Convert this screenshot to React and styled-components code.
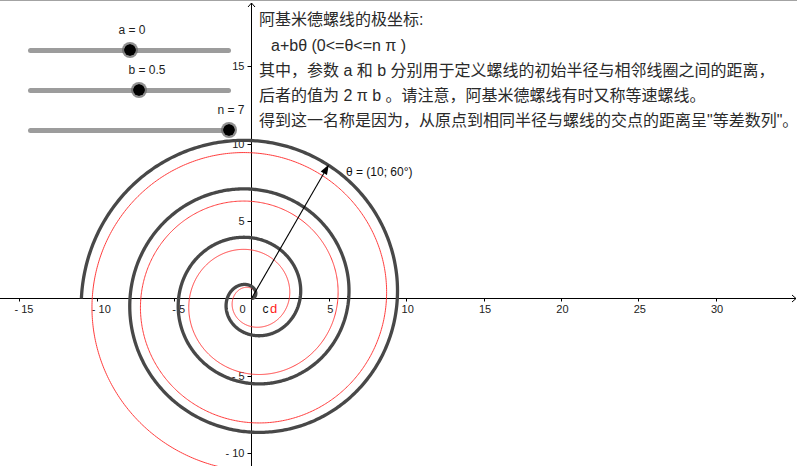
import React from "react";
import styled, { createGlobalStyle } from "styled-components";

const GlobalStyle = createGlobalStyle`
  html, body { margin: 0; padding: 0; background: #ffffff; }
  #root { width: 797px; height: 466px; }
`;

const S = 15.47;
const OX = 251.5;
const OY = 298.5;
const W = 797;
const H = 466;

const px = (x) => OX + x * S;
const py = (y) => OY - y * S;

const smooth = (x) => (x <= 0 ? 0 : x >= 1 ? 1 : 3 * x * x - 2 * x * x * x);

function polarPath(rFn, t0, t1, n) {
  let d = "";
  for (let i = 0; i <= n; i++) {
    const t = t0 + ((t1 - t0) * i) / n;
    const r = rFn(t);
    const x = px(r * Math.cos(t));
    const y = py(r * Math.sin(t));
    d += (i ? "L" : "M") + x.toFixed(2) + " " + y.toFixed(2);
  }
  return d;
}

const darkR = (t) => 0.5 * t;
const redR = (t) => {
  const k = smooth(t / 6);
  return Math.max(0, 0.5 * t - 0.7 * k - 0.09 * Math.sin(t) * k);
};

const Frame = styled.div`
  position: relative;
  width: ${W}px;
  height: ${H}px;
  box-sizing: border-box;
  border-top: 1px solid #a3a3a3;
  background: #ffffff;
  overflow: hidden;
`;

const GraphCanvas = styled.svg`
  display: block;
  font-family: "Liberation Sans", Arial, sans-serif;
`;

const Overlay = styled.div`
  position: absolute;
  inset: 0;
  display: flex;
  pointer-events: none;
`;

const SliderPanel = styled.div`
  flex: 0 0 259px;
  box-sizing: border-box;
  padding: 19px 0 0 28px;
  display: flex;
  flex-direction: column;
`;

const SliderBlock = styled.div`
  width: 203px;
  height: 40px;
  display: flex;
  flex-direction: column;
`;

const Caption = styled.div`
  height: 20px;
  line-height: 20px;
  font-family: "Liberation Sans", Arial, sans-serif;
  font-size: 12px;
  color: #1e1e1e;
  white-space: nowrap;
`;

const TrackRow = styled.div`
  height: 20px;
  display: flex;
  align-items: center;
`;

const Track = styled.div`
  position: relative;
  width: 203px;
  height: 5px;
  border-radius: 3px;
  background: #9c9c9c;
`;

const Knob = styled.div`
  position: absolute;
  top: 50%;
  width: 16px;
  height: 16px;
  box-sizing: border-box;
  border-radius: 50%;
  background: #000000;
  background-clip: padding-box;
  border: 2.5px solid rgba(105, 105, 105, 0.75);
  transform: translate(-50%, -50%);
`;

const TextPanel = styled.div`
  flex: 1;
  padding-top: 5.5px;
  font-family: "Liberation Sans", "Noto Sans CJK SC", sans-serif;
  font-size: 16px;
  line-height: 25px;
  color: #2a2a2a;
`;

const TextLine = styled.div`
  white-space: pre;
  padding-left: ${(p) => p.$indent || 0}px;
  margin-bottom: ${(p) => p.$gap || 0}px;
`;

function Slider({ name, value, min, max }) {
  const frac = (value - min) / (max - min);
  const knobX = 2.5 + frac * 198;
  return (
    <SliderBlock>
      <Caption style={{ marginLeft: knobX - 11 }}>{`${name} = ${value}`}</Caption>
      <TrackRow>
        <Track>
          <Knob style={{ left: knobX }} />
        </Track>
      </TrackRow>
    </SliderBlock>
  );
}

function Graph() {
  const xTicks = [-15, -10, -5, 5, 10, 15, 20, 25, 30];
  const yTicks = [15, 10, 5, -5, -10];
  const dark = polarPath(darkR, 0, 7 * Math.PI, 1600);
  const red = polarPath(redR, 0, 7.5 * Math.PI, 1800);

  const tipX = px(5);
  const tipY = py(10 * Math.sin(Math.PI / 3));
  const ang = Math.atan2(tipY - OY, tipX - OX);
  const hl = 10;
  const hw = 3.6;
  const bx = tipX - hl * Math.cos(ang);
  const by = tipY - hl * Math.sin(ang);
  const nx = -Math.sin(ang);
  const ny = Math.cos(ang);
  const head = `${tipX},${tipY} ${bx + hw * nx},${by + hw * ny} ${bx - hw * nx},${by - hw * ny}`;

  return (
    <GraphCanvas width={W} height={H - 1} viewBox={`0 1 ${W} ${H - 1}`}>
      {/* axes */}
      <line x1="0" y1={OY} x2={W - 1} y2={OY} stroke="#000" strokeWidth="1" />
      <polyline points={`${W - 5},${OY - 3.5} ${W - 1},${OY} ${W - 5},${OY + 3.5}`} fill="none" stroke="#000" strokeWidth="1" />
      <line x1={OX} y1={H} x2={OX} y2="3" stroke="#000" strokeWidth="1" />
      <polyline points={`${OX - 3.5},7 ${OX},3 ${OX + 3.5},7`} fill="none" stroke="#000" strokeWidth="1" />

      {xTicks.map((v) => (
        <g key={"x" + v}>
          <line x1={Math.round(px(v)) + 0.5} y1={OY} x2={Math.round(px(v)) + 0.5} y2={OY + 3} stroke="#000" strokeWidth="1" />
          <text x={px(v) + (v < 0 ? 4.5 : 1.5)} y={OY + 14} fontSize="11" fill="#222" textAnchor="middle">
            {v < 0 ? `- ${-v}` : `${v}`}
          </text>
        </g>
      ))}
      {yTicks.map((v) => (
        <g key={"y" + v}>
          <line x1={OX - 4} y1={Math.round(py(v)) + 0.5} x2={OX} y2={Math.round(py(v)) + 0.5} stroke="#000" strokeWidth="1" />
          <text x={OX - 7} y={py(v) + 4} fontSize="11" fill="#222" textAnchor="end">
            {v < 0 ? `- ${-v}` : `${v}`}
          </text>
        </g>
      ))}
      <text x={239.5} y={OY + 14} fontSize="11" fill="#222">0</text>

      {/* spirals */}
      <path d={red} fill="none" stroke="#ff3d3d" strokeWidth="1" />
      <path d={dark} fill="none" stroke="#484848" strokeWidth="3.3" />

      {/* vector */}
      <line x1={OX} y1={OY} x2={bx} y2={by} stroke="#000" strokeWidth="1.1" />
      <polygon points={head} fill="#000" />
      <text x="346" y="176" fontSize="12" fill="#111">θ = (10; 60°)</text>

      {/* curve names */}
      <text x="262.5" y="313" fontSize="12" fill="#111">c</text>
      <text x="270" y="313" fontSize="13" fill="#ff1a1a">d</text>
    </GraphCanvas>
  );
}

export default function App() {
  return (
    <>
      <GlobalStyle />
      <Frame>
        <Graph />
        <Overlay>
          <SliderPanel>
            <Slider name="a" value={0} min={-5} max={5} />
            <Slider name="b" value={0.5} min={-5} max={5} />
            <Slider name="n" value={7} min={0} max={7} />
          </SliderPanel>
          <TextPanel>
            <TextLine $gap={1}>阿基米德螺线的极坐标:</TextLine>
            <TextLine $indent={12}>a+bθ (0&lt;=θ&lt;=n π )</TextLine>
            <TextLine>其中，参数 a 和 b 分别用于定义螺线的初始半径与相邻线圈之间的距离，</TextLine>
            <TextLine>后者的值为 2 π b 。请注意，阿基米德螺线有时又称等速螺线。</TextLine>
            <TextLine>得到这一名称是因为，从原点到相同半径与螺线的交点的距离呈"等差数列"。</TextLine>
          </TextPanel>
        </Overlay>
      </Frame>
    </>
  );
}
